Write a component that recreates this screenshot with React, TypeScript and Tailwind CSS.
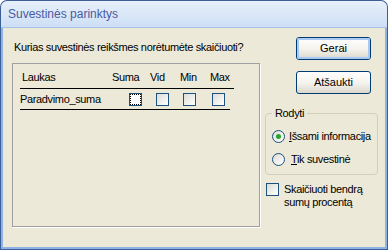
import React from "react";

const font = { fontFamily: '"Liberation Sans", Arial, sans-serif' };

function Check({ focus = false }: { focus?: boolean }) {
  if (focus) {
    return (
      <div className="relative w-[13px] h-[13px] shrink-0 border border-[#1c5180] bg-white">
        <div className="absolute inset-0 border border-dotted border-black" />
      </div>
    );
  }
  return (
    <div className="w-[13px] h-[13px] shrink-0 border border-[#1c5180] bg-linear-to-br from-[#dcdcd7] to-white" />
  );
}

function Radio({ checked = false }: { checked?: boolean }) {
  return (
    <div className="w-[13px] h-[13px] shrink-0 rounded-full border border-[#1c5180] bg-linear-to-br from-[#dcdcd7] to-white flex items-center justify-center">
      {checked && <div className="w-[5px] h-[5px] rounded-full bg-[#2aa52a]" />}
    </div>
  );
}

function Button({ label, def = false }: { label: string; def?: boolean }) {
  return (
    <div className="w-[75px] h-[23px] rounded-[3px] border border-[#003c74] bg-linear-to-b from-white via-[#f5f4ee] to-[#dcd8cc] flex items-center justify-center text-[11px] text-black">
      <div
        className={
          def
            ? "w-full h-full rounded-[2px] border-2 border-[#a9c9f3] flex items-center justify-center"
            : "w-full h-full flex items-center justify-center"
        }
      >
        {label}
      </div>
    </div>
  );
}

export default function App() {
  return (
    <div
      className="w-[388px] h-[250px] flex flex-col bg-[#3c5f98] rounded-t-[7px] p-[1px] overflow-hidden"
      style={font}
    >
      <div className="h-[26px] rounded-t-[6px] bg-linear-to-b from-[#e8f0fb] to-[#cddff5] flex items-center pl-[7px] text-[12px] text-[#4b5aa0] whitespace-nowrap">
        Suvestinės parinktys
      </div>
      <div className="flex-1 border-t border-[#a6c4ea] bg-[#8eb1e6] px-[2px] pb-[2px] flex flex-col">
        <div className="flex-1 bg-[#ece9d8] flex pl-[9px] text-[11px] tracking-[-0.35px] text-black whitespace-nowrap">
          <div className="w-[248px] flex flex-col">
            <div className="mt-[12px] h-[14px] leading-[14px] pl-[2px]">
              Kurias suvestinės reikšmes norėtumėte skaičiuoti?
            </div>
            <div className="mt-[9px] h-[164px] border border-[#a0a0a0] shadow-[1px_1px_0_#ffffff] flex flex-col pl-[7px]">
              <div className="w-[214px] pt-[6px] pb-[4px] border-b border-black flex leading-[14px]">
                <div className="w-[92px] pl-[2px]">Laukas</div>
                <div className="w-[38px]">Suma</div>
                <div className="w-[30px]">Vid</div>
                <div className="w-[30px]">Min</div>
                <div>Max</div>
              </div>
              <div className="w-[210px] h-[21px] border-b border-black flex items-center">
                <div className="w-[109px]">Paradvimo_suma</div>
                <Check focus />
                <div className="w-[14px]" />
                <Check />
                <div className="w-[14px]" />
                <Check />
                <div className="w-[16px]" />
                <Check />
              </div>
            </div>
          </div>
          <div className="ml-[5px] w-[113px] flex flex-col">
            <div className="mt-[9px] ml-[31px] flex flex-col gap-[11px] tracking-normal">
              <Button label="Gerai" def />
              <Button label="Atšaukti" />
            </div>
            <fieldset className="mt-[12px] h-[69px] border border-[#d0d0bf] rounded-[4px] p-0 m-0">
              <legend className="ml-[6px] px-[3px] leading-[14px]">Rodyti</legend>
              <div className="flex items-center mt-[9px] ml-[6px] h-[14px]">
                <Radio checked />
                <span className="ml-[4px]">
                  <span className="underline">I</span>šsami informacija
                </span>
              </div>
              <div className="flex items-center mt-[9px] ml-[6px] h-[14px]">
                <Radio />
                <span className="ml-[6px]">
                  <span className="underline">T</span>ik suvestinė
                </span>
              </div>
            </fieldset>
            <div className="mt-[8px] ml-[1px] flex items-start">
              <Check />
              <div className="ml-[5px] leading-[13px]">
                Skaičiuoti bendrą
                <br />
                sumų procentą
              </div>
            </div>
          </div>
        </div>
      </div>
    </div>
  );
}
